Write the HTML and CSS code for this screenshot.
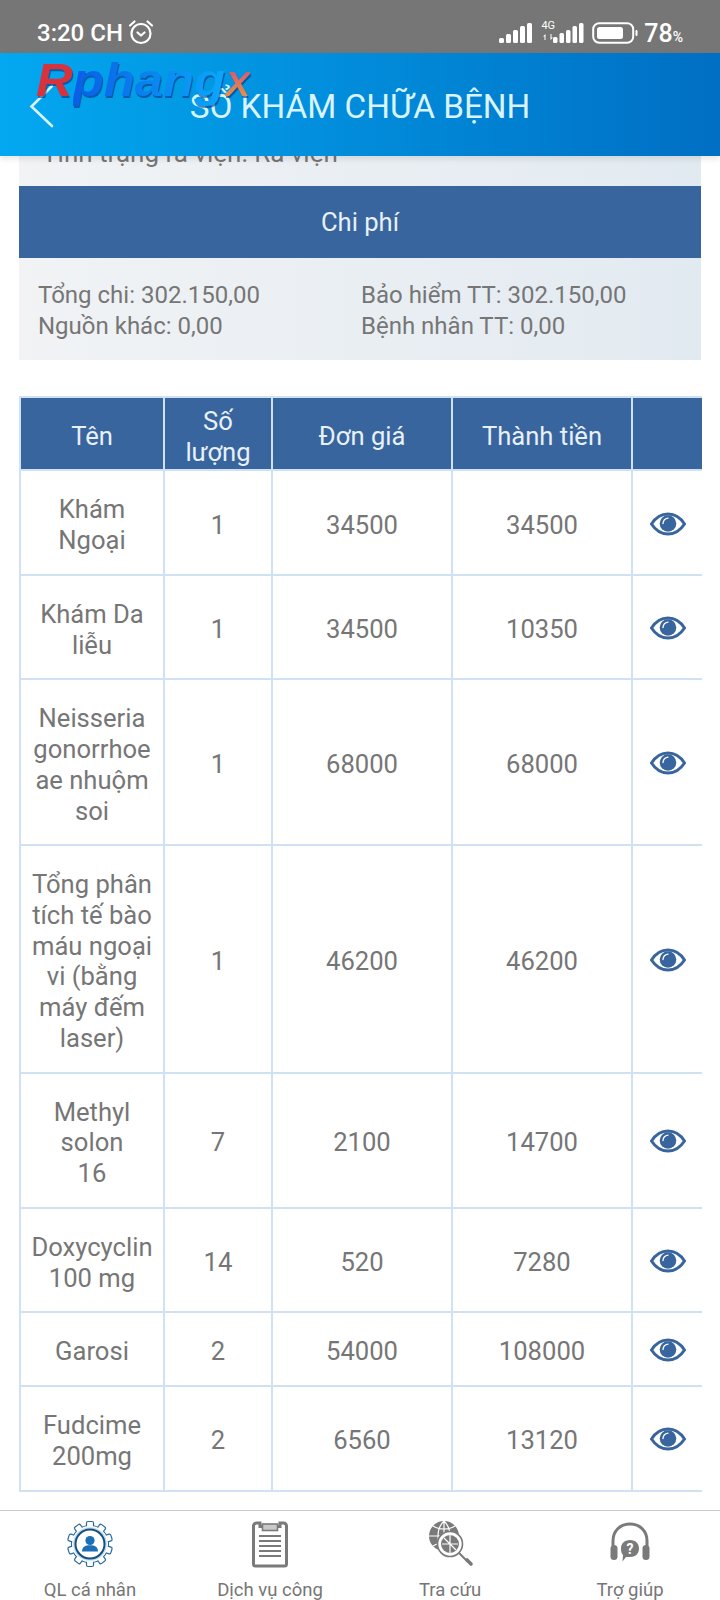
FILE: index.html
```html
<!DOCTYPE html>
<html lang="vi">
<head>
    <meta charset="UTF-8">
    <meta name="viewport" content="width=device-width, initial-scale=1.0">
    <title>Sổ khám chữa bệnh</title>
    <link rel="stylesheet" href="styles.css">
</head>
<body>
<svg class="defs" width="0" height="0">
    <symbol id="eye" viewBox="0 0 36 24">
        <path d="M1.500 12C6 5 11.500 2 18 2s12 3 16.500 10C30 19 24.500 22 18 22S6 19 1.500 12z" fill="none" stroke="#38659e" stroke-width="3"/>
        <circle cx="18" cy="11.500" r="8.300" fill="#38659e"/>
        <path d="M13 11.500c.2-3 2-5 5-5.400" fill="none" stroke="#fff" stroke-width="1.300" stroke-linecap="round"/>
    </symbol>
</svg>

<div class="status">
    <div class="status-left">
        <span class="time">3:20 CH</span>
        <svg class="alarm" width="26" height="26" viewBox="0 0 26 26" fill="none" stroke="#fff" stroke-width="2.200" stroke-linecap="round" stroke-linejoin="round">
            <circle cx="13" cy="14.500" r="9.500"/>
            <path d="M9.500 13.500l3.500 3 3.500-3"/>
            <path d="M2 6.500L6.500 2.500M24 6.500L19.500 2.500"/>
        </svg>
    </div>
    <div class="status-right">
        <svg width="34" height="22" viewBox="0 0 34 22" fill="#fff">
            <rect x="1" y="16" width="5" height="5" rx="1.500"/>
            <rect x="8" y="12" width="5" height="9" rx="1.500"/>
            <rect x="15" y="8" width="5" height="13" rx="1.500"/>
            <rect x="22" y="4" width="5" height="17" rx="1.500"/>
            <rect x="29" y="1" width="5" height="20" rx="1.500"/>
        </svg>
        <div class="net">
            <div class="net-type">
                <span class="net-label">4G</span>
                <svg width="12" height="8" viewBox="0 0 12 8" fill="#fff"><path d="M1 3.500L3.500 1v6H2.500V3.500zM8.500 1v6L11 4.500H9.500V1z"/></svg>
            </div>
            <svg width="32" height="22" viewBox="0 0 32 22" fill="#fff">
                <rect x="0" y="15" width="4.500" height="6" rx="1.500"/>
                <rect x="6.500" y="11" width="4.500" height="10" rx="1.500"/>
                <rect x="13" y="8" width="4.500" height="13" rx="1.500"/>
                <rect x="19.500" y="4" width="4.500" height="17" rx="1.500"/>
                <rect x="26" y="1" width="4.500" height="20" rx="1.500"/>
            </svg>
        </div>
        <svg class="battery" width="46" height="22" viewBox="0 0 46 22">
            <rect x="1.200" y="1.200" width="40" height="19.600" rx="6" fill="none" stroke="#fff" stroke-width="2"/>
            <rect x="5" y="5" width="26" height="12" rx="2.500" fill="#fff"/>
            <rect x="43.500" y="8" width="2" height="6" rx="1" fill="#fff"/>
        </svg>
        <span class="percent">78<small>%</small></span>
    </div>
</div>

<div class="appbar">
    <svg class="back" width="26" height="44" viewBox="0 0 26 44" fill="none" stroke="#d6f3ff" stroke-width="2.600" stroke-linecap="round"><path d="M23 2L2.500 22.500 23 42"/></svg>
    <h1>SỔ KHÁM CHỮA BỆNH</h1>
    <div class="logo"><span class="logo-r">R</span><span class="logo-b">phang</span><span class="logo-x">X</span></div>
</div>

<div class="content">
    <div class="info-tail">Tình trạng ra viện: Ra viện</div>
    <div class="section-title">Chi phí</div>
    <div class="cost">
        <div>Tổng chi: 302.150,00</div>
        <div>Bảo hiểm TT: 302.150,00</div>
        <div>Nguồn khác: 0,00</div>
        <div>Bệnh nhân TT: 0,00</div>
    </div>

    <div class="table-wrap">
        <table>
            <colgroup>
                <col class="c-name"><col class="c-qty"><col class="c-price"><col class="c-price"><col class="c-eye">
            </colgroup>
            <thead>
                <tr><th>Tên</th><th>Số lượng</th><th>Đơn giá</th><th>Thành tiền</th><th></th></tr>
            </thead>
            <tbody>
                <tr><td>Khám<br>Ngoại</td><td>1</td><td>34500</td><td>34500</td><td><svg class="eye"><use href="#eye"/></svg></td></tr>
                <tr><td>Khám Da liễu</td><td>1</td><td>34500</td><td>10350</td><td><svg class="eye"><use href="#eye"/></svg></td></tr>
                <tr><td>Neisseria gonorrhoe ae nhuộm soi</td><td>1</td><td>68000</td><td>68000</td><td><svg class="eye"><use href="#eye"/></svg></td></tr>
                <tr><td>Tổng phân tích tế bào máu ngoại vi (bằng máy đếm laser)</td><td>1</td><td>46200</td><td>46200</td><td><svg class="eye"><use href="#eye"/></svg></td></tr>
                <tr><td>Methyl<br>solon<br>16</td><td>7</td><td>2100</td><td>14700</td><td><svg class="eye"><use href="#eye"/></svg></td></tr>
                <tr><td>Doxycyclin 100 mg</td><td>14</td><td>520</td><td>7280</td><td><svg class="eye"><use href="#eye"/></svg></td></tr>
                <tr><td>Garosi</td><td>2</td><td>54000</td><td>108000</td><td><svg class="eye"><use href="#eye"/></svg></td></tr>
                <tr><td>Fudcime 200mg</td><td>2</td><td>6560</td><td>13120</td><td><svg class="eye"><use href="#eye"/></svg></td></tr>
            </tbody>
        </table>
    </div>
</div>

<div class="nav">
    <div class="nav-item">
        <svg width="48" height="48" viewBox="0 0 48 48">
            <g fill="#fff" stroke="#2b6a9f" stroke-width="1.200">
                <circle cx="24" cy="24" r="18.500"/>
                <rect x="20.500" y="1.500" width="7" height="8" rx="1.500"/>
                <rect x="20.500" y="1.500" width="7" height="8" rx="1.500" transform="rotate(36 24 24)"/>
                <rect x="20.500" y="1.500" width="7" height="8" rx="1.500" transform="rotate(72 24 24)"/>
                <rect x="20.500" y="1.500" width="7" height="8" rx="1.500" transform="rotate(108 24 24)"/>
                <rect x="20.500" y="1.500" width="7" height="8" rx="1.500" transform="rotate(144 24 24)"/>
                <rect x="20.500" y="1.500" width="7" height="8" rx="1.500" transform="rotate(180 24 24)"/>
                <rect x="20.500" y="1.500" width="7" height="8" rx="1.500" transform="rotate(216 24 24)"/>
                <rect x="20.500" y="1.500" width="7" height="8" rx="1.500" transform="rotate(252 24 24)"/>
                <rect x="20.500" y="1.500" width="7" height="8" rx="1.500" transform="rotate(288 24 24)"/>
                <rect x="20.500" y="1.500" width="7" height="8" rx="1.500" transform="rotate(324 24 24)"/>
            </g>
            <circle cx="24" cy="24" r="18" fill="#fff"/>
            <circle cx="24" cy="24" r="16.800" fill="#bcdcf0"/>
            <circle cx="24" cy="24" r="14.500" fill="#fff" stroke="#17507f" stroke-width="2"/>
            <circle cx="24" cy="20.500" r="4.600" fill="#1a6fb5"/>
            <path d="M16 31.500c0-4.500 3-6.300 8-6.300s8 1.800 8 6.300z" fill="#1a6fb5"/>
        </svg>
        <span>QL cá nhân</span>
    </div>
    <div class="nav-item">
        <svg width="48" height="48" viewBox="0 0 48 48">
            <path d="M14 3h-3.500A3 3 0 0 0 7.500 6v38a2 2 0 0 0 2 2h29a2 2 0 0 0 2-2V6a3 3 0 0 0-3-3H34v3.500H14z" fill="none" stroke="#7a7a7a" stroke-width="3"/>
            <rect x="16.500" y="4" width="15" height="6.500" fill="#c9c9c9" stroke="#7a7a7a" stroke-width="1.600"/>
            <path d="M13 16h22M13 21h22M13 26h22M13 31h22M13 36h22" stroke="#7a7a7a" stroke-width="2.200"/>
        </svg>
        <span>Dịch vụ công</span>
    </div>
    <div class="nav-item">
        <svg width="48" height="48" viewBox="0 0 48 48">
            <circle cx="18" cy="16" r="15" fill="#7a7a7a"/>
            <path d="M3 16h30M18 1v30M7 6c6 4 16 4 22 0M7 26c6-4 16-4 22 0M18 1c-8 8-8 22 0 30M18 1c8 8 8 22 0 30" fill="none" stroke="#fff" stroke-width="1.200"/>
            <circle cx="24" cy="24" r="12.500" fill="#fff" stroke="#7a7a7a" stroke-width="1.600"/>
            <circle cx="24" cy="24" r="9" fill="#7a7a7a"/>
            <path d="M16 24h16M24 15v18M18 18l12 12" stroke="#fff" stroke-width="1.200"/>
            <path d="M33 33l9 9" stroke="#7a7a7a" stroke-width="2" fill="none"/>
            <path d="M41 40l4 4" stroke="#7a7a7a" stroke-width="3.600" stroke-linecap="round"/>
        </svg>
        <span>Tra cứu</span>
    </div>
    <div class="nav-item">
        <svg width="48" height="48" viewBox="0 0 48 48">
            <path d="M7 26v-5C7 11 14 4 24 4s17 7 17 17v5" fill="none" stroke="#7a7a7a" stroke-width="3"/>
            <rect x="4.500" y="25" width="7" height="15" rx="3.500" fill="#7a7a7a"/>
            <rect x="36.500" y="25" width="7" height="15" rx="3.500" fill="#7a7a7a"/>
            <path d="M24 20c5.500 0 9 3.500 9 8.500S29.500 37 24 37h-4l-3.500 4.500.5-6.500c-1.500-1.500-2-4-2-6.500 0-5 3.500-8.500 9-8.500z" fill="#7a7a7a"/>
            <text x="24" y="33.500" class="help-mark">?</text>
        </svg>
        <span>Trợ giúp</span>
    </div>
</div>
</body>
</html>
```

FILE: styles.css
```css
* {
    margin: 0;
    padding: 0;
    box-sizing: border-box;
}
html, body {
    height: 1600px;
    overflow: hidden;
}
body {
    position: relative;
    display: flex;
    flex-direction: column;
    background-color: #fff;
    font-family: Roboto, "Liberation Sans", sans-serif;
    color: #767676;
}
.defs {
    position: absolute;
}

/* status bar */
.status {
    height: 53px;
    flex: none;
    padding: 13px 37px 0 37px;
    display: flex;
    justify-content: space-between;
    align-items: center;
    background-color: #767676;
    color: #fff;
}
.status-left, .status-right {
    display: flex;
    align-items: center;
}
.time {
    font-size: 24px;
    font-weight: 500;
}
.alarm {
    margin-left: 5px;
    margin-bottom: 2px;
}
.status-right svg {
    display: block;
}
.net {
    position: relative;
    margin-left: 7px;
    padding-left: 14px;
    height: 22px;
}
.net-type {
    position: absolute;
    left: 0;
    top: -4px;
    display: flex;
    flex-direction: column;
    align-items: center;
    width: 18px;
}
.net-label {
    font-size: 11px;
    line-height: 15px;
}
.battery {
    margin-left: 7px;
}
.percent {
    margin-left: 6px;
    font-size: 25px;
    font-weight: 500;
}
.percent small {
    font-size: 14px;
}

/* app bar, sits on top of the scrolled content */
.appbar {
    position: absolute;
    top: 53px;
    left: 0;
    width: 720px;
    height: 103px;
    z-index: 2;
    display: flex;
    align-items: center;
    justify-content: center;
    background: linear-gradient(to right, #03a8f0, #006fc4);
    box-shadow: 0 3px 6px rgba(0, 0, 0, 0.1);
}
.appbar h1 {
    font-size: 33.300px;
    font-weight: 400;
    color: #d9f4ff;
    margin-top: 3px;
}
.back {
    position: absolute;
    left: 29px;
    top: 31px;
}
.logo {
    position: absolute;
    left: 36px;
    top: -3px;
    font-family: "Liberation Sans", sans-serif;
    font-weight: bold;
    font-style: italic;
    font-size: 47px;
    line-height: 60px;
    white-space: nowrap;
    transform: scaleX(1.08);
    transform-origin: left center;
    filter: drop-shadow(1px 2px 0 rgba(0, 50, 130, 0.6));
}
.logo-r {
    color: #d8323c;
}
.logo-b {
    color: transparent;
    background: linear-gradient(to right, #0a5ee6, #0aa8fa);
    -webkit-background-clip: text;
    background-clip: text;
}
.logo-x {
    font-size: 35px;
    color: transparent;
    background: linear-gradient(to bottom, #d84a78, #e6a23c);
    -webkit-background-clip: text;
    background-clip: text;
}

/* content */
.content {
    flex: 1;
    min-height: 0;
}
.info-tail {
    height: 133px;
    margin: 0 19px;
    padding: 0 0 17px 23px;
    display: flex;
    align-items: flex-end;
    font-size: 26px;
    line-height: 31px;
    background: linear-gradient(to right, #f1f3f5, #e2eaf1);
}
.section-title {
    height: 72px;
    margin: 0 19px;
    display: flex;
    align-items: center;
    justify-content: center;
    font-size: 25.600px;
    color: #e8f0f8;
    background-color: #38659e;
}
.cost {
    height: 102px;
    margin: 0 19px;
    padding: 22px 0 0 19px;
    display: grid;
    grid-template-columns: 323px 1fr;
    grid-auto-rows: 31px;
    font-size: 24px;
    line-height: 31px;
    background: linear-gradient(to right, #f1f3f5, #e2eaf1);
}

/* table, its right border runs out of the wrapper */
.table-wrap {
    width: 683px;
    margin: 36px 0 0 19px;
    overflow: hidden;
}
table {
    width: 690px;
    table-layout: fixed;
    border-collapse: collapse;
    font-size: 25.600px;
    line-height: 30.700px;
    text-align: center;
}
.c-name {
    width: 144px;
}
.c-qty {
    width: 108px;
}
.c-price {
    width: 180px;
}
.c-eye {
    width: 78px;
}
th, td {
    border: 2px solid #cfe1f2;
}
th {
    height: 73px;
    padding: 8px 10px 2px;
    font-weight: 400;
    color: #e8f0f8;
    background-color: #38659e;
}
td {
    padding: 23px 9px 18.100px;
    overflow-wrap: anywhere;
}
td:last-child {
    padding: 2px 7px 0 0;
}
.eye {
    display: block;
    width: 36px;
    height: 24px;
    margin: 0 auto;
}

/* bottom nav */
.nav {
    height: 90px;
    flex: none;
    padding-top: 9px;
    display: grid;
    grid-template-columns: repeat(4, 1fr);
    border-top: 1.500px solid #c8ccd2;
    background-color: #fff;
}
.nav-item {
    display: flex;
    flex-direction: column;
    align-items: center;
    font-size: 18.500px;
    line-height: 24px;
    color: #767676;
}
.nav-item svg {
    display: block;
    margin-bottom: 10px;
}
.help-mark {
    font-family: Roboto, sans-serif;
    font-size: 14px;
    font-weight: 700;
    fill: #fff;
    text-anchor: middle;
}
```
